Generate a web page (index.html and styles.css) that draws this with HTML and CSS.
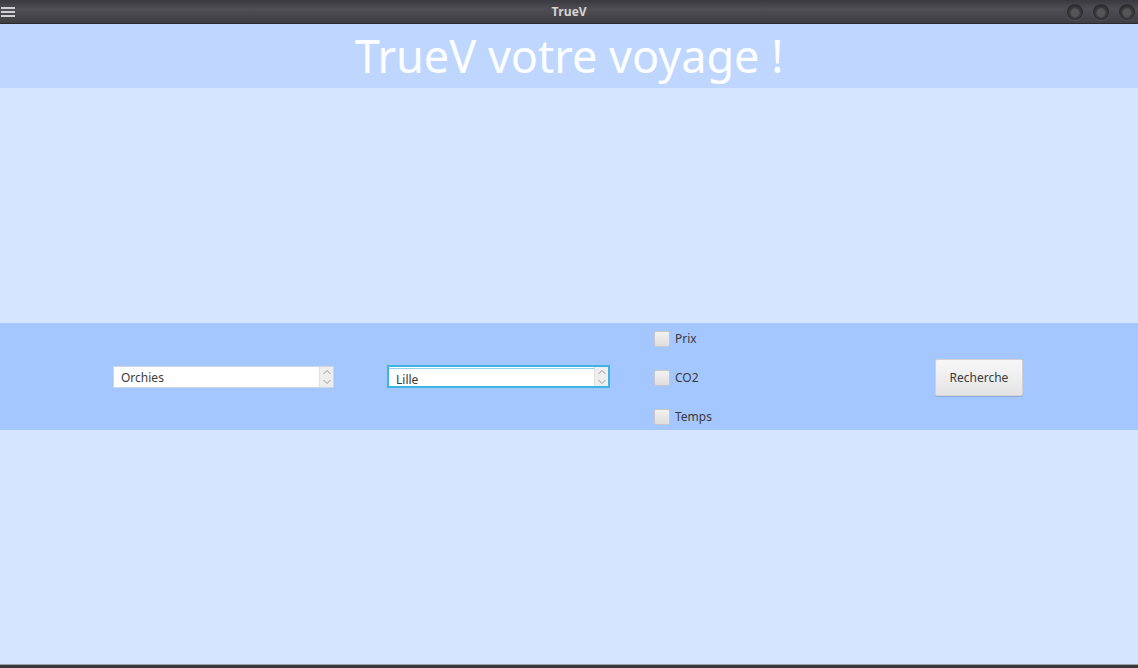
FILE: index.html
```html
<!DOCTYPE html>
<html>
<head>
<meta charset="utf-8">
<link rel="stylesheet" href="styles.css">
</head>
<body>
<div class="window">
  <div class="titlebar">
    <div class="menu-icon"><span></span><span></span><span></span></div>
    <div class="win-title">TrueV</div>
    <div class="win-buttons"><span class="wb"></span><span class="wb"></span><span class="wb"></span></div>
  </div>
  <div class="header"><h1>TrueV votre voyage !</h1></div>
  <div class="upper"></div>
  <div class="band">
    <div class="spin">
      <div class="spin-text">Orchies</div>
      <div class="spin-arrows">
        <svg width="12" height="10" viewBox="0 0 12 10"><path d="M2.5 7 L6 3.5 L9.5 7" fill="none" stroke="#9a9a9a" stroke-width="1"/></svg>
        <svg width="12" height="10" viewBox="0 0 12 10"><path d="M2.5 3 L6 6.5 L9.5 3" fill="none" stroke="#9a9a9a" stroke-width="1"/></svg>
      </div>
    </div>
    <div class="spin focused">
      <div class="spin-text">Lille</div>
      <div class="spin-arrows">
        <svg width="12" height="10" viewBox="0 0 12 10"><path d="M2.5 7 L6 3.5 L9.5 7" fill="none" stroke="#9a9a9a" stroke-width="1"/></svg>
        <svg width="12" height="9" viewBox="0 0 12 9"><path d="M2.5 3 L6 6.5 L9.5 3" fill="none" stroke="#9a9a9a" stroke-width="1"/></svg>
      </div>
    </div>
    <div class="checks">
      <label class="check"><span class="box"></span>Prix</label>
      <label class="check"><span class="box"></span>CO2</label>
      <label class="check"><span class="box"></span>Temps</label>
    </div>
    <div class="btn">Recherche</div>
  </div>
  <div class="lower"></div>
  <div class="bottom"></div>
</div>
</body>
</html>
```
FILE: styles.css
```css
* { box-sizing: border-box; }
html, body { margin: 0; padding: 0; }
body { width: 1138px; height: 668px; overflow: hidden; font-family: "Noto Sans", "Open Sans", sans-serif; }
.window { display: flex; flex-direction: column; height: 668px; background: #d6e5ff; }
.titlebar {
  height: 24px; flex: none; display: flex; align-items: center; position: relative;
  background: linear-gradient(#3a393e, #4f4e54 40%, #3e3d42);
  border-bottom: 1px solid #2a2a2d;
}
.menu-icon { width: 14px; margin-left: 1px; display: flex; flex-direction: column; gap: 2px; }
.menu-icon span { display: block; height: 2px; background: #d0d0d0; }
.win-title {
  position: absolute; left: 0; right: 0; top: 0; text-align: center;
  font-family: "Open Sans", "Noto Sans", sans-serif; font-weight: 700; font-size: 12px;
  color: #d4d4d4; line-height: 24px;
}
.win-buttons { margin-left: auto; display: flex; gap: 10px; margin-right: 3px; }
.wb {
  width: 16px; height: 16px; border-radius: 50%;
  background: radial-gradient(circle at 50% 55%, #555558 0 30%, #3a3a3d 45%, #2c2c2f 65%, #4a4a4e 100%);
  box-shadow: 0 1px 0 rgba(255,255,255,0.08);
}
.header { height: 64px; flex: none; background: #bfd7ff; display: flex; justify-content: center; align-items: center; }
.header h1 { margin: 0; font-weight: 400; font-size: 45px; color: #fdfeff; line-height: 64px; }
.upper { height: 235px; flex: none; }
.band {
  height: 107px; flex: none; background: #a5c7ff; display: flex; align-items: center;
  padding-left: 113px;
}
.spin {
  width: 221px; height: 22px; background: #fff; border: 1px solid #cfd6e2; display: flex;
  font-size: 12px; color: #3a3a3a;
}
.spin + .spin { margin-left: 53px; }
.spin-text { flex: 1; padding-left: 7px; padding-top: 1px; line-height: 20px; }
.spin-arrows {
  width: 14px; display: flex; flex-direction: column; background: #eeeeee;
  border-left: 1px solid #e0e0e0; align-items: center;
}
.spin-arrows svg { display: block; }
.spin.focused { width: 223px; height: 23px; border: 2px solid #3db5e0; box-shadow: inset 0 1px 0 #fff, inset 0 2px 0 #8fd4ec; }
.spin.focused .spin-text { padding-left: 7px; padding-top: 5px; line-height: 16px; }
.checks { margin-left: 44px; display: flex; flex-direction: column; gap: 23px; margin-top: 2px; }
.check { display: flex; align-items: center; font-size: 12px; color: #3a3a3a; height: 16px; }
.box {
  width: 16px; height: 16px; margin-right: 5px; border-radius: 2px;
  background: linear-gradient(#f2f2f2, #dedede); border: 1px solid #c8c8c8;
}
.btn {
  margin-left: 223px; width: 88px; height: 37px; border-radius: 2px;
  background: linear-gradient(#f8f8f8, #e4e4e4); border: 1px solid #d2d2d2;
  box-shadow: 0 1px 1px rgba(0,0,0,0.15);
  font-size: 12px; color: #3a3a3a; display: flex; align-items: center; justify-content: center;
  margin-top: 2px;
}
.lower { flex: 1; }
.bottom { height: 4px; flex: none; background: linear-gradient(#9aa0a8 0 1px, #3a3a3c 1px); }
```
